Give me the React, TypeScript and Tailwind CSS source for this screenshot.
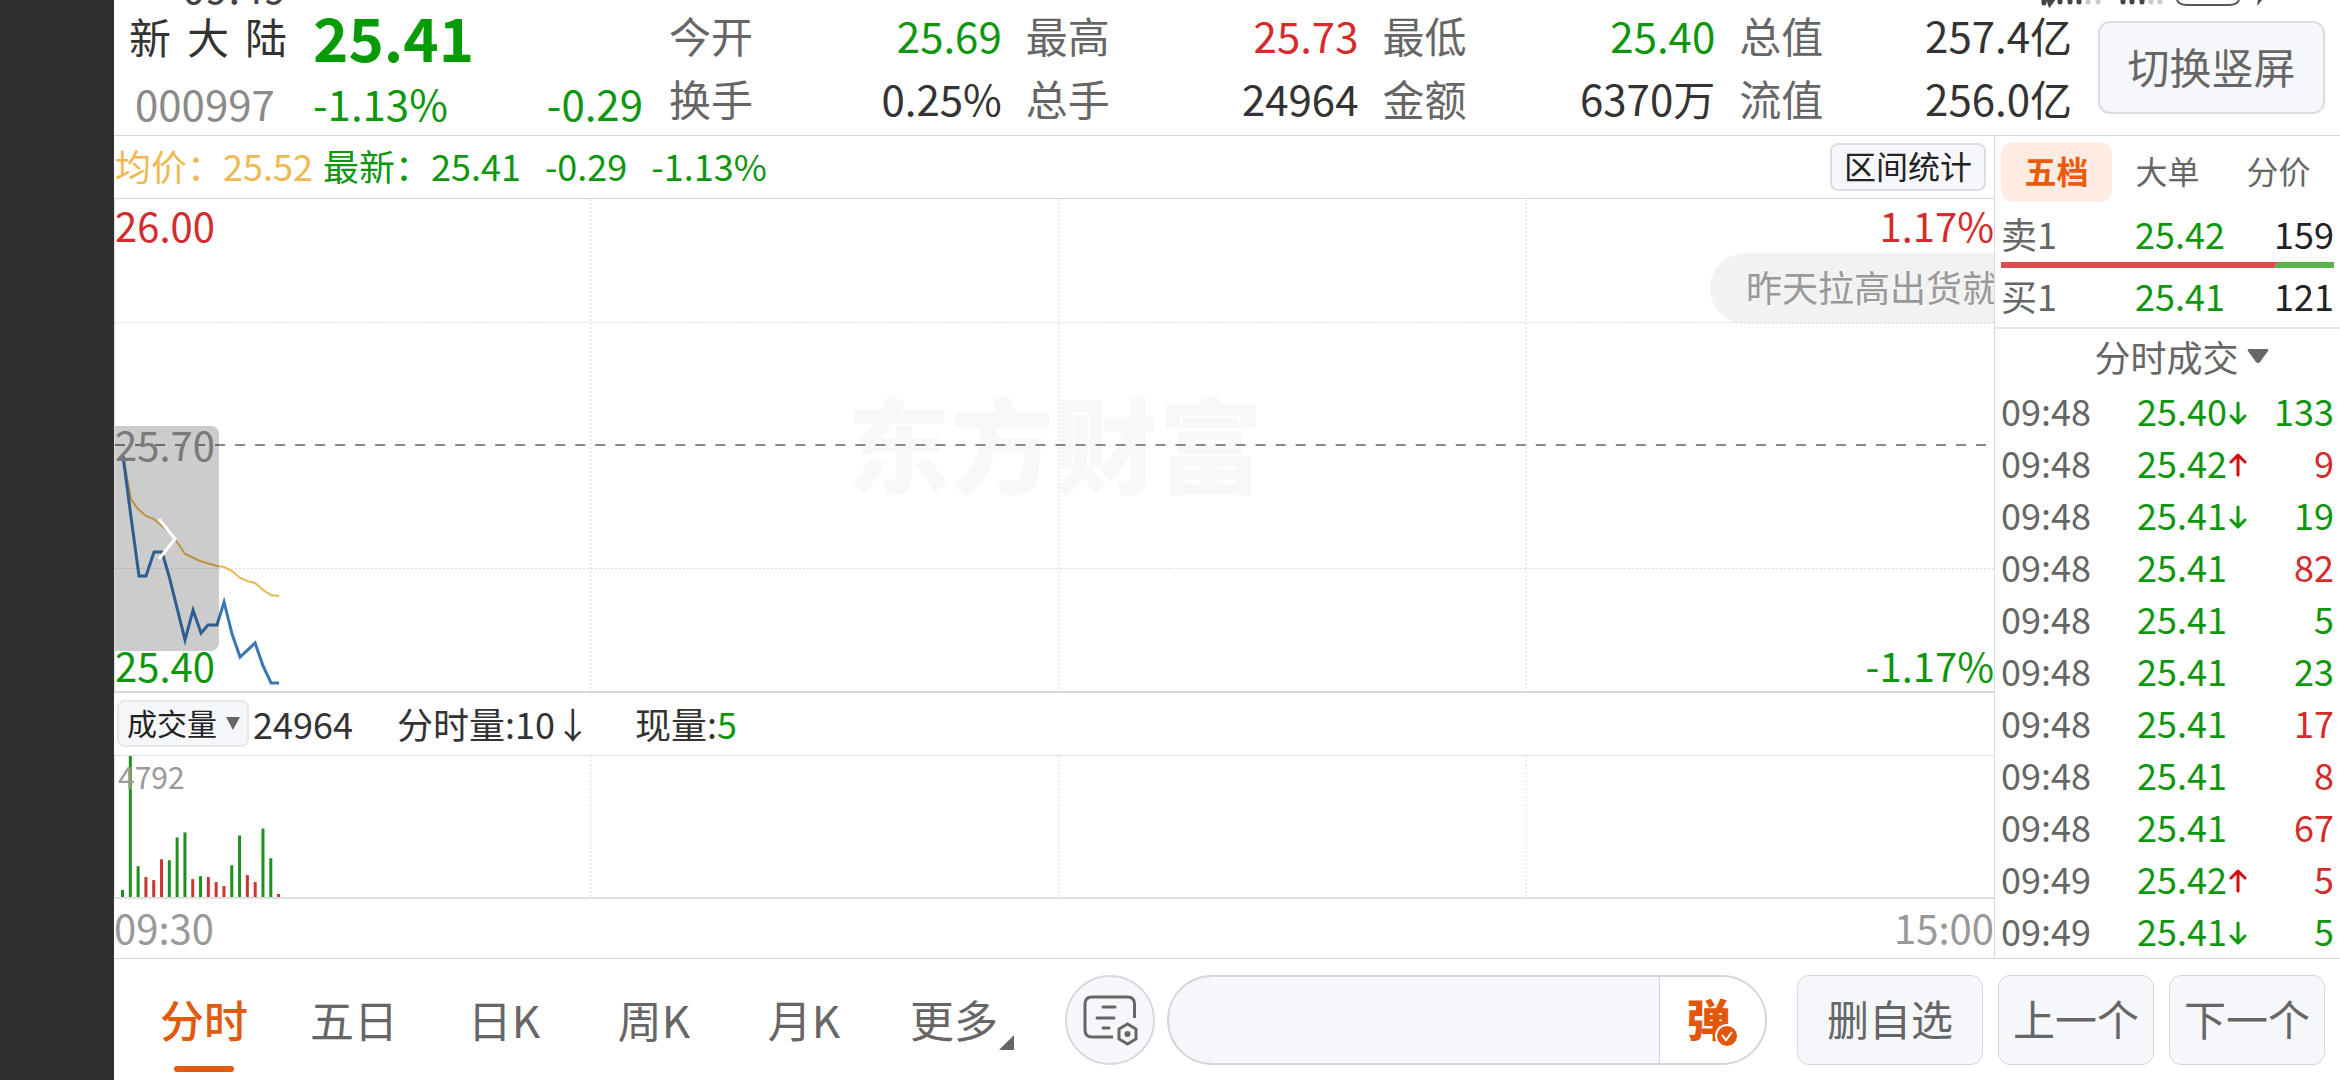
import { type ReactNode } from "react";

type Tone = "up" | "down" | "plain";

const toneClass: Record<Tone, string> = {
  up: "text-[#d42c2c]",
  down: "text-[#0f960f]",
  plain: "text-[#333333]",
};

const quotes: { label: string; value: string; tone: Tone }[] = [
  { label: "今开", value: "25.69", tone: "down" },
  { label: "最高", value: "25.73", tone: "up" },
  { label: "最低", value: "25.40", tone: "down" },
  { label: "总值", value: "257.4亿", tone: "plain" },
  { label: "换手", value: "0.25%", tone: "plain" },
  { label: "总手", value: "24964", tone: "plain" },
  { label: "金额", value: "6370万", tone: "plain" },
  { label: "流值", value: "256.0亿", tone: "plain" },
];

const trades: {
  time: string;
  price: string;
  dir?: "up" | "down";
  qty: number;
  tone: Tone;
}[] = [
  { time: "09:48", price: "25.40", dir: "down", qty: 133, tone: "down" },
  { time: "09:48", price: "25.42", dir: "up", qty: 9, tone: "up" },
  { time: "09:48", price: "25.41", dir: "down", qty: 19, tone: "down" },
  { time: "09:48", price: "25.41", qty: 82, tone: "up" },
  { time: "09:48", price: "25.41", qty: 5, tone: "down" },
  { time: "09:48", price: "25.41", qty: 23, tone: "down" },
  { time: "09:48", price: "25.41", qty: 17, tone: "up" },
  { time: "09:48", price: "25.41", qty: 8, tone: "up" },
  { time: "09:48", price: "25.41", qty: 67, tone: "up" },
  { time: "09:49", price: "25.42", dir: "up", qty: 5, tone: "up" },
  { time: "09:49", price: "25.41", dir: "down", qty: 5, tone: "down" },
];

// one bar per minute, height in chart units
const volumes: [number, "up" | "down"][] = [
  [7, "down"],
  [142, "down"],
  [31, "down"],
  [20, "up"],
  [17, "up"],
  [38, "up"],
  [37, "down"],
  [60, "down"],
  [65, "down"],
  [18, "up"],
  [21, "down"],
  [20, "up"],
  [15, "up"],
  [11, "up"],
  [32, "down"],
  [62, "down"],
  [22, "up"],
  [15, "up"],
  [69, "down"],
  [39, "down"],
  [3, "up"],
];

const gridX = [475, 943, 1410];

const pricePoints =
  "8,257 16,318 24,377 31,377 39,353 47,353 54,377 70,441 78,411 86,434 93,426 102,426 109,403 117,435 125,458 140,444 148,467 156,484 164,484";
const averagePoints =
  "8,257 16,300 22,309 31,317 39,320 47,327 55,334 62,343 70,355 85,362 102,367 109,368 117,372 125,379 132,382 140,384 148,391 156,396 164,397";

function StatusBar() {
  return (
    <>
      <span className="absolute -top-[34px] left-[182px] text-[42px] leading-10 text-[#444444]">
        09:49
      </span>
      <svg
        className="absolute top-0 right-[70px]"
        width="230"
        height="8"
        viewBox="0 0 230 8"
        fill="none"
        strokeLinecap="round"
      >
        <path
          d="M4 0v3M9 0l1 3 3-4M20 0v2M30 0v2M39 0v2M83 0v2M92 0v2M102 0v2"
          stroke="#444"
          strokeWidth="5"
        />
        <path
          d="M48 0v2M58 0v2M111 0v2M120 0v2"
          stroke="#ccc"
          strokeWidth="5"
        />
        <path d="M137 0q2 5 10 5h42q8 0 10-5" stroke="#555" strokeWidth="2" />
        <path d="M222 0l-5 6 1-6z" fill="#444" />
      </svg>
    </>
  );
}

function Header() {
  return (
    <header className="flex h-[136px] border-b border-[#d6d8d9] pr-[15px]">
      <div className="w-[555px] shrink-0 pl-[15px]">
        <div className="flex h-[72px] items-center gap-[26px]">
          <h1 className="flex gap-4 text-[42px] leading-[64px] text-[#333333]">
            <span>新</span>
            <span>大</span>
            <span>陆</span>
          </h1>
          <strong className="text-[60px] leading-[72px] font-bold text-[#079b07]">
            25.41
          </strong>
        </div>
        <div className="flex h-[62px] items-center text-[42px] leading-[62px] text-[#0f960f]">
          <span className="w-[184px] pl-1.5 text-[#8a8a8a]">000997</span>
          <span className="grow">-1.13%</span>
          <span className="pr-[26px]">-0.29</span>
        </div>
      </div>
      <dl className="grid grow grid-cols-4 content-start gap-x-6 pt-[3px] text-[42px] leading-[63px]">
        {quotes.map((quote) => (
          <div key={quote.label} className="flex justify-between">
            <dt className="text-[#666666]">{quote.label}</dt>
            <dd className={toneClass[quote.tone]}>{quote.value}</dd>
          </div>
        ))}
      </dl>
      <button className="mt-[21px] ml-[26px] h-[93px] w-[227px] shrink-0 rounded-xl border-2 border-[#dadde1] bg-[#f6f7fa] pb-1 text-[42px] leading-none text-[#666666]">
        切换竖屏
      </button>
    </header>
  );
}

function PriceChart() {
  return (
    <div className="relative min-h-[492px] grow overflow-hidden border-b-2 border-l border-[#dadada] text-[40px] leading-10">
      <div className="absolute inset-0 flex items-center justify-center pb-2 text-[104px] leading-none font-black text-[#f8f8f8]">
        东方财富
      </div>
      <div className="absolute top-[54px] right-0 h-[71px] w-[284px] overflow-hidden rounded-l-full bg-[#f2f2f2] pl-9 text-[36px] leading-[66px] whitespace-nowrap text-[#999999]">
        昨天拉高出货就
      </div>
      <svg
        className="absolute inset-0 h-full w-full"
        viewBox="0 0 1878 492"
        preserveAspectRatio="none"
        fill="none"
      >
        <g stroke="#dcdcdc" strokeDasharray="2 2">
          {gridX.map((x) => (
            <path key={x} d={`M${x}.5 0V492`} />
          ))}
          <path d="M0 123.5H1878M0 369.5H1878" />
        </g>
        <path
          d="M0 246H1878"
          stroke="#888"
          strokeWidth="2"
          strokeDasharray="10 10"
        />
        <polyline points={averagePoints} stroke="#eab755" strokeWidth="2" />
        <polyline points={pricePoints} stroke="#3a75b4" strokeWidth="3" />
      </svg>
      <span className="absolute top-1.5 left-0 text-[#d42c2c]">26.00</span>
      <span className="absolute top-1.5 right-0 text-[#d42c2c]">1.17%</span>
      <span className="absolute top-[225px] left-0 text-[#999999]">25.70</span>
      <span className="absolute bottom-1.5 left-0 text-[#0f960f]">25.40</span>
      <span className="absolute right-0 bottom-1.5 text-[#0f960f]">
        -1.17%
      </span>
      <button
        aria-label="展开"
        className="absolute top-[227px] left-0 flex h-[225px] w-[104px] items-center rounded-r-lg bg-black/20 pl-[42px]"
      >
        <svg width="22" height="44" viewBox="0 0 22 44" fill="none">
          <path d="M2 2l16 20L2 42" stroke="#fff" strokeWidth="3" />
        </svg>
      </button>
    </div>
  );
}

function VolumeChart() {
  return (
    <div className="relative h-[144px] border-t border-b-2 border-l border-[#e0e0e0]">
      <svg
        className="absolute inset-0 h-full w-full"
        viewBox="0 0 1878 142"
        preserveAspectRatio="none"
      >
        <g stroke="#dcdcdc" strokeDasharray="2 2">
          {gridX.map((x) => (
            <path key={x} d={`M${x}.5 0V142`} />
          ))}
        </g>
        {volumes.map(([height, dir], i) => (
          <rect
            key={i}
            x={6 + i * 7.8}
            y={142 - height}
            width="3"
            height={height}
            fill={dir === "up" ? "#cc3333" : "#1d911d"}
          />
        ))}
      </svg>
      <span className="absolute top-1 left-[3px] text-[30px] leading-8 text-[#999999]">
        4792
      </span>
    </div>
  );
}

function VolumeBar() {
  return (
    <div className="flex h-[62px] items-center gap-11 pb-0.5 pl-[3px] text-[36px] leading-[60px] text-[#333333]">
      <div className="flex items-center gap-1">
        <label className="relative block">
          <select
            aria-label="指标"
            className="block h-[47px] w-[132px] appearance-none rounded-lg border-2 border-[#e6e8ea] bg-[#f6f7fa] pb-1 pl-2 text-[30px] leading-10 text-[#222222]"
          >
            <option>成交量</option>
          </select>
          <svg
            className="pointer-events-none absolute top-[17px] right-[9px]"
            width="14"
            height="13"
            viewBox="0 0 14 13"
            fill="#666"
          >
            <path d="M0 0h14L7 13z" />
          </svg>
        </label>
        <span>24964</span>
      </div>
      <span>分时量:10↓</span>
      <span>
        现量:<span className="text-[#0f960f]">5</span>
      </span>
    </div>
  );
}

function OrderRow({
  side,
  price,
  qty,
}: {
  side: string;
  price: string;
  qty: number;
}) {
  return (
    <div className="flex h-[56px] items-center pb-0.5 text-[36px] leading-[54px]">
      <span className="w-[134px] text-[#666666]">{side}</span>
      <span className="grow text-[#0f960f]">{price}</span>
      <span className="text-[#222222]">{qty}</span>
    </div>
  );
}

function TickArrow({ dir }: { dir: "up" | "down" }) {
  return (
    <svg
      className="ml-0.5 inline-block align-baseline"
      width="18"
      height="25"
      viewBox="0 0 18 25"
      fill="none"
      stroke={dir === "up" ? "#d40c0c" : "#0c9a0c"}
      strokeWidth="3"
      strokeLinecap="round"
      strokeLinejoin="round"
    >
      {dir === "up" ? (
        <path d="M9 22V2M2 9l7-7 7 7" />
      ) : (
        <path d="M9 2v20M2 15l7 7 7-7" />
      )}
    </svg>
  );
}

function SidePanel() {
  return (
    <aside className="w-[346px] shrink-0 border-l border-[#d6d8d9]">
      <div className="px-1.5 pt-1.5">
        <div className="grid grid-cols-3 text-[32px] leading-[56px] text-[#666666]">
          <button className="h-[60px] rounded-xl bg-[#feece3] pb-1 font-bold text-[#ea5b0c]">
            五档
          </button>
          <button className="h-[60px] pb-1">大单</button>
          <button className="h-[60px] pb-1">分价</button>
        </div>
        <div className="pt-1">
          <OrderRow side="卖1" price="25.42" qty={159} />
          <svg
            className="block h-1.5 w-full"
            viewBox="0 0 333 6"
            preserveAspectRatio="none"
          >
            <path d="M0 0h277l-4 6H0z" fill="#e04a4a" />
            <path d="M277 0h56v6h-60z" fill="#5ab34a" />
          </svg>
          <OrderRow side="买1" price="25.41" qty={121} />
        </div>
      </div>
      <div className="mt-[3px] flex h-[57px] items-center justify-center border-t-2 border-[#e8e8ea] pb-0.5 pl-7">
        <label className="relative block">
          <select
            aria-label="成交明细"
            className="block w-[174px] appearance-none bg-transparent text-[36px] leading-[54px] text-[#666666]"
          >
            <option>分时成交</option>
          </select>
          <svg
            className="pointer-events-none absolute top-5 right-0"
            width="22"
            height="14"
            viewBox="0 0 22 14"
            fill="#666"
          >
            <path d="M2 0h18q2 0 1 2l-8 11q-2 2-4 0L1 2Q0 0 2 0z" />
          </svg>
        </label>
      </div>
      <table className="w-full text-[36px] leading-[52px]">
        <tbody>
          {trades.map((trade, i) => (
            <tr key={i} className="h-[52px]">
              <td className="w-[142px] p-0 pl-1.5 text-[#666666]">
                {trade.time}
              </td>
              <td className="p-0 whitespace-nowrap text-[#0f960f]">
                {trade.price}
                {trade.dir && <TickArrow dir={trade.dir} />}
              </td>
              <td className={`p-0 pr-1.5 text-right ${toneClass[trade.tone]}`}>
                {trade.qty}
              </td>
            </tr>
          ))}
        </tbody>
      </table>
    </aside>
  );
}

function PeriodTab({
  active,
  children,
}: {
  active?: boolean;
  children: ReactNode;
}) {
  return (
    <button
      className={`relative h-[121px] w-[150px] pb-0.5 text-[44px] ${
        active ? "font-medium text-[#e05a10]" : "text-[#666666]"
      }`}
    >
      {children}
      {active && (
        <span className="absolute bottom-2 left-[45px] h-1.5 w-[60px] rounded-full bg-[#e05a10]" />
      )}
    </button>
  );
}

function FooterButton({
  wide,
  children,
}: {
  wide?: boolean;
  children: ReactNode;
}) {
  return (
    <button
      className={`h-[90px] shrink-0 rounded-xl border border-[#d4d7da] bg-[#f6f7fa] pb-1 text-[42px] leading-none text-[#666666] ${
        wide ? "w-[186px]" : "w-[156px]"
      }`}
    >
      {children}
    </button>
  );
}

function Footer() {
  return (
    <footer className="flex h-[122px] items-center border-t border-[#d6d8d9] px-[15px]">
      <nav className="flex shrink-0">
        <PeriodTab active>分时</PeriodTab>
        <PeriodTab>五日</PeriodTab>
        <PeriodTab>日K</PeriodTab>
        <PeriodTab>周K</PeriodTab>
        <PeriodTab>月K</PeriodTab>
        <PeriodTab>
          更多
          <svg
            className="absolute right-[15px] bottom-[30px]"
            width="15"
            height="15"
            viewBox="0 0 15 15"
            fill="#666"
          >
            <path d="M15 0v15H0z" />
          </svg>
        </PeriodTab>
      </nav>
      <button
        aria-label="弹幕设置"
        className="ml-9 flex h-[90px] w-[90px] shrink-0 items-center justify-center rounded-full border-2 border-[#d8dadd] bg-[#f6f7fa]"
      >
        <svg width="56" height="52" viewBox="0 0 56 52" fill="none">
          <g stroke="#666" strokeWidth="3" strokeLinecap="round">
            <path
              d="M52.5 24V10q0-7-7-7H10q-7 0-7 7v26q0 7 7 7h21"
              strokeLinecap="butt"
            />
            <path d="M21 13h12M15 24h17M21 34h6" />
          </g>
          <path
            d="M45.5 30l8.5 5v10l-8.5 5-8.5-5V35z"
            stroke="#666"
            strokeWidth="3"
          />
          <circle cx="45.5" cy="40" r="3" fill="#666" />
        </svg>
      </button>
      <div className="ml-3 flex h-[90px] grow overflow-hidden rounded-full border-2 border-[#d4d7da] bg-[#f6f7fa]">
        <input
          aria-label="发弹幕"
          className="w-0 grow bg-transparent pl-10 text-[36px] text-[#333333] outline-none"
        />
        <button
          aria-label="弹幕开关"
          className="flex w-[106px] items-center justify-center border-l border-[#d4d7da] bg-white"
        >
          <span className="relative block w-[52px] pb-1 text-left text-[44px] leading-[52px] font-black text-[#e2570b]">
            弹
            <svg
              className="absolute right-0 bottom-0"
              width="24"
              height="24"
              viewBox="0 0 24 24"
              fill="none"
            >
              <circle
                cx="12"
                cy="12"
                r="11"
                fill="#e2570b"
                stroke="#fff"
                strokeWidth="2"
              />
              <path d="M7 11l4 5 6-8" stroke="#fff" strokeWidth="2" />
            </svg>
          </span>
        </button>
      </div>
      <div className="ml-[30px] flex shrink-0 gap-[15px]">
        <FooterButton wide>删自选</FooterButton>
        <FooterButton>上一个</FooterButton>
        <FooterButton>下一个</FooterButton>
      </div>
    </footer>
  );
}

export default function App() {
  return (
    <div className="relative flex min-h-screen overflow-hidden bg-white font-['Noto_Sans_CJK_SC',sans-serif]">
      <div className="w-[114px] shrink-0 bg-[#303030]" />
      <div className="flex min-w-0 grow flex-col">
        <StatusBar />
        <Header />
        <div className="flex grow">
          <main className="flex min-w-0 grow flex-col">
            <div className="flex h-[63px] items-center border-b border-[#d6d8d9] pr-2 pl-px text-[36px] leading-[58px]">
              <p className="mb-1 text-[#f0b850]">均价：25.52</p>
              <p className="mb-1 ml-2.5 flex gap-6 text-[#0f960f]">
                <span>最新：25.41</span>
                <span>-0.29</span>
                <span>-1.13%</span>
              </p>
              <button className="ml-auto h-12 w-[156px] rounded-lg border-2 border-[#dadde1] bg-[#f6f7fa] pb-1 text-[32px] leading-none text-[#222222]">
                区间统计
              </button>
            </div>
            <PriceChart />
            <VolumeBar />
            <VolumeChart />
            <div className="flex h-[59px] items-center justify-between pb-1 text-[40px] leading-none text-[#999999]">
              <span>09:30</span>
              <span>15:00</span>
            </div>
          </main>
          <SidePanel />
        </div>
        <Footer />
      </div>
    </div>
  );
}
